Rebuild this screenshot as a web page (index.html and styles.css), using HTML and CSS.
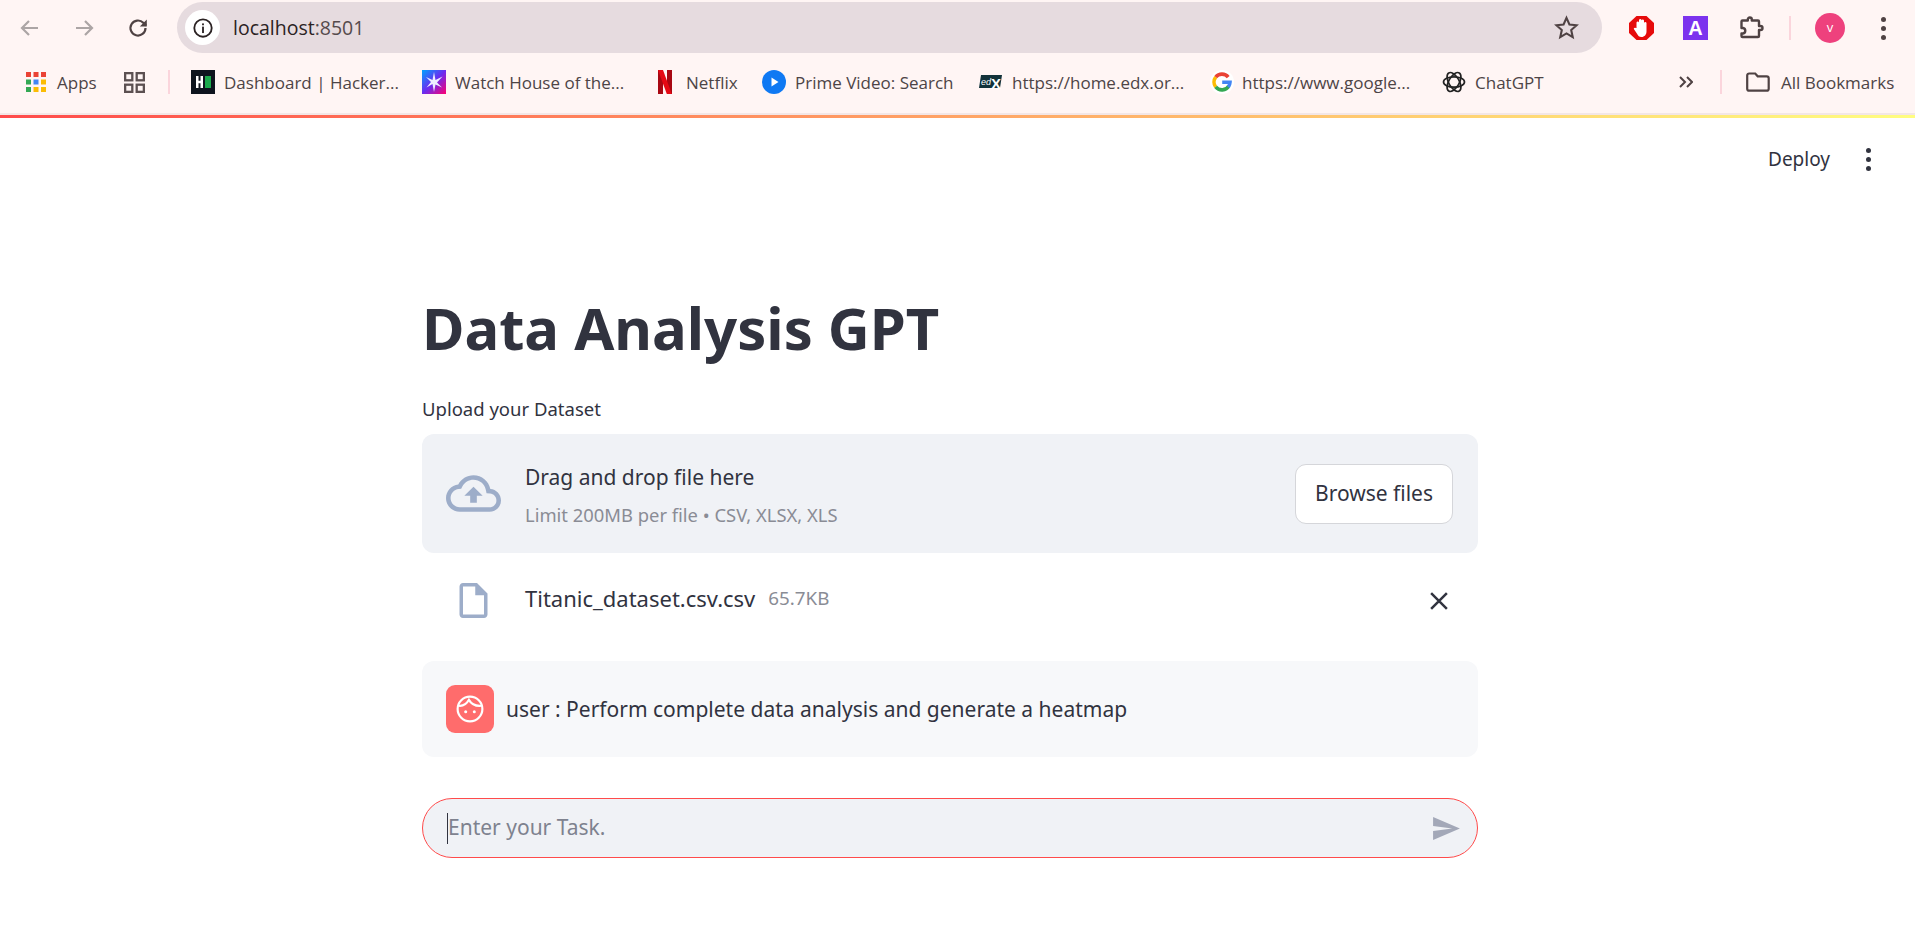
FILE: index.html
```html
<!DOCTYPE html>
<html lang="en">
<head>
    <meta charset="utf-8">
    <title>Data Analysis GPT</title>
    <link rel="stylesheet" href="styles.css">
</head>
<body>
<header class="chrome">
    <div class="toolbar">
        <svg class="nav-icon -off" viewBox="0 0 24 24"><path d="M20 12H5M11 5l-7 7 7 7"/></svg>
        <svg class="nav-icon -off" viewBox="0 0 24 24"><path d="M4 12h15M13 5l7 7-7 7"/></svg>
        <svg class="nav-icon" viewBox="0 0 24 24"><path d="M19.5 12a7.5 7.5 0 1 1-2.2-5.3L20 9.500"/><path class="fill" d="M20.800 3.500v7h-7z"/></svg>
        <div class="address-bar">
            <span class="site-info">
                <svg viewBox="0 0 24 24" width="22" height="22"><circle cx="12" cy="12" r="9.500" fill="none" stroke="#2b2223" stroke-width="2"/><rect x="11" y="10.500" width="2" height="7" fill="#2b2223"/><rect x="11" y="7" width="2" height="2" fill="#2b2223"/></svg>
            </span>
            <span class="url">localhost<span class="url-port">:8501</span></span>
            <svg class="star" viewBox="0 0 24 24"><path d="M12 2.800l2.800 6.300 6.900.7-5.200 4.600 1.500 6.800-6-3.500-6 3.500 1.500-6.800-5.200-4.600 6.900-.7z"/></svg>
        </div>
        <svg class="ext ext-block" viewBox="0 0 25 24"><path d="M7.500 0h10l7.500 7v10l-7.500 7h-10L0 17V7z" fill="#e60b0b"/><path d="M7.500 12V6.500a1.300 1.300 0 0 1 2.500 0V11V4a1.300 1.300 0 0 1 2.500 0v7V4.500a1.300 1.300 0 0 1 2.500 0V11V7a1.300 1.300 0 0 1 2.500 0v8.500c0 3-2 5.500-5 5.500-2.300 0-3.500-1.300-4.500-3.300L5 13.300c-.7-1.300 1-2.300 1.800-1.200z" fill="#fff"/></svg>
        <span class="ext ext-letter">A</span>
        <svg class="ext ext-puzzle" viewBox="0 0 25 24"><path d="M2.500 5.500a1 1 0 0 1 1-1h5.300V3.500a2 2 0 0 1 4 0v1h6.200a1 1 0 0 1 1 1V10h1.500a2 2 0 0 1 0 4H20v6a1 1 0 0 1-1 1H3.500a1 1 0 0 1-1-1v-2.500H4a2.800 2.800 0 0 0 0-5.500H2.500z" fill="none" stroke="#4f4243" stroke-width="2.400" stroke-linejoin="round"/></svg>
        <span class="sep sep-top"></span>
        <span class="profile">v</span>
        <span class="dots dots-chrome"><i></i><i></i><i></i></span>
    </div>
    <nav class="bookmarks">
        <a class="mark">
            <svg class="mark-icon -apps" viewBox="0 0 20 20">
                <rect width="5" height="5" fill="#ea4335"/><rect x="7.500" width="5" height="5" fill="#ea4335"/><rect x="15" width="5" height="5" fill="#ea4335"/>
                <rect y="7.500" width="5" height="5" fill="#34a853"/><rect x="7.500" y="7.500" width="5" height="5" fill="#4285f4"/><rect x="15" y="7.500" width="5" height="5" fill="#fbbc04"/>
                <rect y="15" width="5" height="5" fill="#34a853"/><rect x="7.500" y="15" width="5" height="5" fill="#fbbc04"/><rect x="15" y="15" width="5" height="5" fill="#fbbc04"/>
            </svg>
            Apps
        </a>
        <svg class="tabs-icon" viewBox="0 0 22 22"><g fill="none" stroke="#5c5051" stroke-width="2.400"><rect x="1.200" y="1.200" width="7.500" height="7.500"/><rect x="13.300" y="1.200" width="7.500" height="7.500"/><rect x="1.200" y="13.300" width="7.500" height="7.500"/><rect x="13.300" y="13.300" width="7.500" height="7.500"/></g></svg>
        <span class="sep"></span>
        <a class="mark">
            <svg class="mark-icon" viewBox="0 0 24 24"><rect width="24" height="24" fill="#0e141e"/><path d="M5 6h2.500v4.800h2V6H12v12H9.500v-4.700h-2V18H5z" fill="#fff"/><rect x="14" y="6" width="6" height="12" fill="#1ba94c"/></svg>
            Dashboard | Hacker...
        </a>
        <a class="mark">
            <svg class="mark-icon" viewBox="0 0 24 24"><defs><linearGradient id="hs" x1="0" y1="0" x2="1" y2="1"><stop offset="0" stop-color="#00a2ff"/><stop offset=".5" stop-color="#6a2cf0"/><stop offset="1" stop-color="#ff0070"/></linearGradient></defs><rect width="24" height="24" fill="url(#hs)"/><path d="M12 2l1.500 8 7-3.500-5.500 6 5 5-6.500-3L12 22l-1.500-8-6 3.500 4.500-5.500-5-5 6.500 3z" fill="#eef"/></svg>
            Watch House of the...
        </a>
        <a class="mark">
            <svg class="mark-icon -netflix" viewBox="5 0 14 24"><path d="M5 0h5v24l-5 .500z" fill="#a80712"/><path d="M14 0h5v24.500L14 24z" fill="#a80712"/><path d="M5 0h5l9 24.500h-5z" fill="#e50914"/></svg>
            Netflix
        </a>
        <a class="mark">
            <svg class="mark-icon" viewBox="0 0 24 24"><circle cx="12" cy="12" r="12" fill="#0f79f3"/><path d="M9.500 7.500l7 4.500-7 4.500z" fill="#fff"/></svg>
            Prime Video: Search
        </a>
        <a class="mark">
            <svg class="mark-icon" viewBox="0 0 24 24"><path d="M2 5h21l-2 13H0z" fill="#12323a"/><text x="2" y="15" class="edx-e">ed</text><text x="12" y="19" class="edx-x">X</text></svg>
            https://home.edx.or...
        </a>
        <a class="mark">
            <svg class="mark-icon -google" viewBox="0 0 24 24"><circle cx="12" cy="12" r="12" fill="#fff"/><g fill="none" stroke-width="3.600"><path d="M18.200 7.200A8 8 0 0 0 5.700 7.100" stroke="#ea4335"/><path d="M5.700 7.100a8 8 0 0 0 0 9.800" stroke="#fbbc04"/><path d="M5.700 16.900a8 8 0 0 0 13.200-1" stroke="#34a853"/><path d="M12.200 12.200H20a8 8 0 0 1-1.800 4.800" stroke="#4285f4"/></g></svg>
            https://www.google...
        </a>
        <a class="mark">
            <svg class="mark-icon" viewBox="0 0 24 24"><g fill="none" stroke="#222" stroke-width="1.700"><ellipse cx="12" cy="12" rx="10.500" ry="5.200"/><ellipse cx="12" cy="12" rx="10.500" ry="5.200" transform="rotate(60 12 12)"/><ellipse cx="12" cy="12" rx="10.500" ry="5.200" transform="rotate(120 12 12)"/></g></svg>
            ChatGPT
        </a>
        <svg class="more" viewBox="0 0 14 12"><path d="M1 1l5 5-5 5M8 1l5 5-5 5" fill="none" stroke="#4f4243" stroke-width="2"/></svg>
        <span class="sep"></span>
        <a class="mark -wide">
            <svg class="mark-icon" viewBox="0 0 24 20"><path d="M1.200 3.500a2 2 0 0 1 2-2h6l2.500 2.800h9a2 2 0 0 1 2 2v10.400a2 2 0 0 1-2 2H3.200a2 2 0 0 1-2-2z" fill="none" stroke="#4f4243" stroke-width="2.200"/></svg>
            All Bookmarks
        </a>
    </nav>
</header>
<div class="decoration"></div>

<div class="app-header">
    <span>Deploy</span>
    <span class="dots"><i></i><i></i><i></i></span>
</div>

<main class="block">
    <h1>Data Analysis GPT</h1>
    <label class="upload-label">Upload your Dataset</label>
    <section class="dropzone">
        <svg class="cloud" viewBox="0 4 24 16"><path d="M19.350 10.040C18.670 6.590 15.640 4 12 4 9.110 4 6.600 5.640 5.350 8.040 2.340 8.360 0 10.910 0 14c0 3.310 2.690 6 6 6h13c2.760 0 5-2.240 5-5 0-2.640-2.050-4.780-4.650-4.960zM19 18H6c-2.210 0-4-1.790-4-4 0-2.050 1.530-3.760 3.560-3.970l1.070-.11.5-.95C8.080 7.140 9.940 6 12 6c2.620 0 4.880 1.860 5.390 4.430l.3 1.500 1.530.11c1.560.1 2.780 1.410 2.780 2.960 0 1.650-1.350 3-3 3zM8 13h2.550v3h2.900v-3H16l-4-4z"/></svg>
        <div class="dropzone-text">
            <div class="drop-title">Drag and drop file here</div>
            <div class="drop-limit">Limit 200MB per file • CSV, XLSX, XLS</div>
        </div>
        <button type="button" class="browse">Browse files</button>
    </section>
    <section class="file-row">
        <svg class="file-icon" viewBox="4 2 16 20"><path d="M14 2H6c-1.100 0-1.990.9-1.990 2L4 20c0 1.100.89 2 1.990 2H18c1.100 0 2-.9 2-2V8l-6-6zM6 20V4h7v5h5v11H6z"/></svg>
        <span class="file-name">Titanic_dataset.csv.csv</span>
        <span class="file-size">65.7KB</span>
        <svg class="file-close" viewBox="0 0 16 16"><path d="M1 1l14 14M15 1L1 15"/></svg>
    </section>
    <section class="chat-message">
        <span class="avatar">
            <svg viewBox="0 0 26 26" width="28" height="28"><g fill="none" stroke="#fff" stroke-width="2"><circle cx="13" cy="13" r="11.500"/><path d="M2.500 10c4 .5 7-1 9.500-5.500 2 3.500 6 6 11.500 5.500"/></g><circle cx="9" cy="15.500" r="1.400" fill="#fff"/><circle cx="17" cy="15.500" r="1.400" fill="#fff"/></svg>
        </span>
        <span class="chat-text">user : Perform complete data analysis and generate a heatmap</span>
    </section>
    <section class="chat-input">
        <span class="caret"></span>
        <span class="placeholder">Enter your Task.</span>
        <svg class="send" viewBox="2 3 21 18"><path d="M2.010 21L23 12 2.010 3 2 10l15 2-15 2z"/></svg>
    </section>
</main>
</body>
</html>
```

FILE: styles.css
```css
* {
    box-sizing: border-box;
    margin: 0;
    padding: 0;
}
html, body {
    height: 100%;
    overflow: hidden;
}
body {
    background: #fff;
    color: #31333f;
    font-family: "Noto Sans", sans-serif;
    font-size: 21px;
}

/* browser chrome */
.chrome {
    background: #fff5f4;
    height: 115px;
    border-bottom: 2px solid #f3e6e6;
    font-family: "Open Sans", sans-serif;
}
.toolbar {
    display: flex;
    align-items: center;
    height: 56px;
    padding-left: 18px;
}
.nav-icon {
    width: 24px;
    height: 24px;
    margin-right: 30px;
    margin-top: -1px;
    fill: none;
    stroke: #4f4243;
    stroke-width: 2.2;
}
.nav-icon .fill {
    fill: #4f4243;
    stroke: none;
}
.nav-icon.-off {
    stroke: #aca5a5;
}
.address-bar {
    display: flex;
    align-items: center;
    flex: 0 0 1425px;
    height: 51px;
    margin-left: -3px;
    margin-top: -1px;
    padding: 0 23px 0 8px;
    background: #e6dbdf;
    border-radius: 26px;
}
.site-info {
    display: flex;
    align-items: center;
    justify-content: center;
    width: 35px;
    height: 35px;
    background: #fff;
    border-radius: 50%;
}
.url {
    margin-left: 13px;
    color: #2b2223;
    font-size: 19.5px;
}
.url-port {
    color: #554a4c;
}
.star {
    width: 25px;
    height: 25px;
    margin-left: auto;
    fill: none;
    stroke: #4f4243;
    stroke-width: 2;
}
.ext {
    flex: none;
    width: 25px;
    height: 24px;
}
.ext-block {
    margin-left: 27px;
}
.ext-letter {
    margin-left: 29px;
    background: #7c33ee;
    color: #fff;
    font-family: "Liberation Sans", sans-serif;
    font-size: 20px;
    font-weight: bold;
    line-height: 24px;
    text-align: center;
}
.ext-puzzle {
    margin-left: 31px;
}
.sep {
    flex: none;
    width: 2px;
    height: 24px;
    background: #fbd5dc;
}
.sep-top {
    margin-left: 25px;
}
.profile {
    flex: none;
    width: 30px;
    height: 30px;
    margin-left: 24px;
    background: #ee417d;
    border-radius: 50%;
    color: #fff;
    font-size: 13px;
    line-height: 28px;
    text-align: center;
}
.dots {
    display: flex;
    flex-direction: column;
    gap: 4px;
}
.dots i {
    display: block;
    width: 5px;
    height: 5px;
    background: #31333f;
    border-radius: 50%;
}
.dots-chrome {
    margin-left: 36px;
}
.dots-chrome i {
    background: #4f4243;
}

.bookmarks {
    display: grid;
    grid-template-columns: 98px 44px 23px 231px 236px 104px 217px 232px 231px 237px 41px 26px auto;
    align-items: center;
    height: 54px;
    margin-top: -1px;
    padding-left: 26px;
    color: #4d4446;
    font-size: 17px;
    white-space: nowrap;
}
.mark {
    display: flex;
    align-items: center;
    gap: 9px;
}
.mark.-wide {
    gap: 11px;
}
.mark-icon {
    flex: none;
    width: 24px;
    height: 24px;
}
.mark-icon.-apps {
    width: 20px;
    height: 20px;
    margin-right: 2px;
}
.mark-icon.-netflix {
    width: 14px;
    margin-right: 5px;
}
.mark-icon.-google {
    margin-left: -1px;
    margin-right: -1px;
}
.tabs-icon {
    width: 21px;
    height: 21px;
}
.more {
    width: 14px;
    height: 12px;
}
.edx-e {
    fill: #fff;
    font-family: "Liberation Sans", sans-serif;
    font-size: 9px;
    font-style: italic;
}
.edx-x {
    fill: #fff;
    font-family: "Liberation Sans", sans-serif;
    font-size: 15px;
    font-weight: bold;
}
.decoration {
    height: 3px;
    background: linear-gradient(90deg, #ff4b4b, #fffd80);
}

/* app */
.app-header {
    display: flex;
    align-items: center;
    justify-content: flex-end;
    gap: 36px;
    height: 82px;
    padding-right: 44px;
    font-size: 19px;
}
.block {
    width: 1056px;
    margin-left: 422px;
}
h1 {
    height: 78px;
    margin-top: 89px;
    font-size: 58px;
    font-weight: 700;
    line-height: 78px;
}
.upload-label {
    display: block;
    height: 26px;
    margin-top: 29px;
    font-size: 18.5px;
    line-height: 26px;
}
.dropzone {
    display: flex;
    align-items: center;
    height: 119px;
    margin-top: 12px;
    padding: 0 25px 0 24px;
    background: #f0f2f6;
    border-radius: 12px;
}
.cloud {
    flex: none;
    width: 55px;
    height: 37px;
    fill: #9dadc9;
}
.dropzone-text {
    margin-left: 24px;
    padding-top: 2px;
}
.drop-title {
    line-height: 28px;
}
.drop-limit {
    margin-top: 12px;
    color: #8a8c95;
    font-size: 18.4px;
    line-height: 24px;
}
.browse {
    width: 158px;
    height: 60px;
    margin-left: auto;
    padding-bottom: 2px;
    background: #fff;
    border: 1px solid #d5d6da;
    border-radius: 11px;
    color: #31333f;
    font: inherit;
}
.file-row {
    display: flex;
    align-items: center;
    height: 94px;
    padding: 0 31px 0 37px;
}
.file-icon {
    flex: none;
    width: 29px;
    height: 35px;
    fill: #9dadc9;
}
.file-name {
    margin-left: 37px;
    margin-bottom: 4px;
    font-size: 22px;
}
.file-size {
    margin-left: 13px;
    margin-bottom: 4px;
    color: #8a8c95;
    font-size: 18.8px;
}
.file-close {
    flex: none;
    width: 18px;
    height: 18px;
    margin-left: auto;
    margin-top: 2px;
    margin-right: -1px;
    fill: none;
    stroke: #31333f;
    stroke-width: 2.2;
}
.chat-message {
    display: flex;
    align-items: center;
    gap: 12px;
    height: 96px;
    margin-top: 14px;
    padding-left: 24px;
    background: #f7f8fa;
    border-radius: 12px;
}
.avatar {
    display: flex;
    align-items: center;
    justify-content: center;
    flex: none;
    width: 48px;
    height: 48px;
    background: #ff6c6c;
    border-radius: 9px;
}
.chat-input {
    display: flex;
    align-items: center;
    height: 60px;
    margin-top: 41px;
    padding: 0 17px 0 24px;
    background: #f0f2f6;
    border: 1px solid #ff4b4b;
    border-radius: 30px;
}
.caret {
    flex: none;
    width: 1px;
    height: 31px;
    background: #31333f;
}
.placeholder {
    padding-bottom: 2px;
    color: #7e828f;
}
.send {
    width: 27px;
    height: 23px;
    margin-left: auto;
    fill: #a3a8b8;
}
```
